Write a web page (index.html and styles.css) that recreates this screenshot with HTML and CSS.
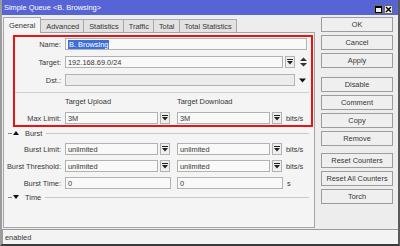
FILE: index.html
```html
<!DOCTYPE html>
<html lang="en">
<head>
    <meta charset="UTF-8">
    <title>Simple Queue &lt;B. Browsing&gt;</title>
    <link rel="stylesheet" href="styles.css">
</head>
<body>
    <div class="window">
        <div class="titlebar">
            <span class="title">Simple Queue &lt;B. Browsing&gt;</span>
            <span class="win-btns">
                <span class="win-btn"><svg width="7" height="7" viewBox="0 0 7 7"><rect x="0.5" y="0.5" width="6" height="6" fill="none" stroke="#000"/><line x1="0" y1="1.5" x2="7" y2="1.5" stroke="#000"/></svg></span>
                <span class="win-btn"><svg width="7" height="7" viewBox="0 0 7 7"><path d="M1 1 L6 6 M6 1 L1 6" stroke="#000" stroke-width="1.4"/></svg></span>
            </span>
        </div>

        <div class="main">
            <div class="left">
                <div class="tabs">
                    <span class="tab active">General</span>
                    <span class="tab">Advanced</span>
                    <span class="tab">Statistics</span>
                    <span class="tab">Traffic</span>
                    <span class="tab">Total</span>
                    <span class="tab">Total Statistics</span>
                </div>

                <div class="panel">
                    <div class="highlight">
                        <div class="row">
                            <span class="label">Name:</span>
                            <span class="field w-name"><span class="sel">B. Browsing</span></span>
                        </div>
                        <div class="row">
                            <span class="label">Target:</span>
                            <span class="field w-target">192.168.69.0/24</span>
                            <span class="spin"><svg width="6" height="6" viewBox="0 0 6 6"><line x1="0" y1="0.5" x2="6" y2="0.5" stroke="#222"/><path d="M0 2 L6 2 L3 5.5 Z" fill="#222"/></svg></span>
                            <span class="updown"><svg width="7" height="10" viewBox="0 0 7 10"><path d="M0 4 L7 4 L3.5 0.5 Z M0 6 L7 6 L3.5 9.5 Z" fill="#333"/></svg></span>
                        </div>
                        <div class="row">
                            <span class="label">Dst.:</span>
                            <span class="field w-dst disabled"></span>
                            <span class="drop"><svg width="7" height="5" viewBox="0 0 7 5"><path d="M0 0.5 L7 0.5 L3.5 4.5 Z" fill="#111"/></svg></span>
                        </div>
                        <div class="separator"></div>
                        <div class="row heads">
                            <span class="label"></span>
                            <span class="head">Target Upload</span>
                            <span class="head">Target Download</span>
                        </div>
                        <div class="row">
                            <span class="label">Max Limit:</span>
                            <span class="field w-rate">3M</span>
                            <span class="spin"><svg width="6" height="6" viewBox="0 0 6 6"><line x1="0" y1="0.5" x2="6" y2="0.5" stroke="#222"/><path d="M0 2 L6 2 L3 5.5 Z" fill="#222"/></svg></span>
                            <span class="field w-rate col2">3M</span>
                            <span class="spin"><svg width="6" height="6" viewBox="0 0 6 6"><line x1="0" y1="0.5" x2="6" y2="0.5" stroke="#222"/><path d="M0 2 L6 2 L3 5.5 Z" fill="#222"/></svg></span>
                            <span class="unit">bits/s</span>
                        </div>
                    </div>

                    <div class="section">
                        <span class="dash"></span>
                        <svg width="6" height="4" viewBox="0 0 6 4"><path d="M0 4 L6 4 L3 0 Z" fill="#111"/></svg>
                        <span class="section-name">Burst</span>
                        <span class="rule"></span>
                    </div>
                    <div class="row plain">
                        <span class="label">Burst Limit:</span>
                        <span class="field w-rate">unlimited</span>
                        <span class="spin"><svg width="6" height="6" viewBox="0 0 6 6"><line x1="0" y1="0.5" x2="6" y2="0.5" stroke="#222"/><path d="M0 2 L6 2 L3 5.5 Z" fill="#222"/></svg></span>
                        <span class="field w-rate col2">unlimited</span>
                        <span class="spin"><svg width="6" height="6" viewBox="0 0 6 6"><line x1="0" y1="0.5" x2="6" y2="0.5" stroke="#222"/><path d="M0 2 L6 2 L3 5.5 Z" fill="#222"/></svg></span>
                        <span class="unit">bits/s</span>
                    </div>
                    <div class="row plain">
                        <span class="label">Burst Threshold:</span>
                        <span class="field w-rate">unlimited</span>
                        <span class="spin"><svg width="6" height="6" viewBox="0 0 6 6"><line x1="0" y1="0.5" x2="6" y2="0.5" stroke="#222"/><path d="M0 2 L6 2 L3 5.5 Z" fill="#222"/></svg></span>
                        <span class="field w-rate col2">unlimited</span>
                        <span class="spin"><svg width="6" height="6" viewBox="0 0 6 6"><line x1="0" y1="0.5" x2="6" y2="0.5" stroke="#222"/><path d="M0 2 L6 2 L3 5.5 Z" fill="#222"/></svg></span>
                        <span class="unit">bits/s</span>
                    </div>
                    <div class="row plain">
                        <span class="label">Burst Time:</span>
                        <span class="field w-time">0</span>
                        <span class="field w-time col2">0</span>
                        <span class="unit">s</span>
                    </div>

                    <div class="section">
                        <span class="dash"></span>
                        <svg width="6" height="4" viewBox="0 0 6 4"><path d="M0 0 L6 0 L3 4 Z" fill="#111"/></svg>
                        <span class="section-name">Time</span>
                        <span class="rule"></span>
                    </div>
                </div>
            </div>

            <div class="buttons">
                <span class="button">OK</span>
                <span class="button">Cancel</span>
                <span class="button">Apply</span>
                <span class="button group">Disable</span>
                <span class="button">Comment</span>
                <span class="button">Copy</span>
                <span class="button">Remove</span>
                <span class="button group-sm">Reset Counters</span>
                <span class="button">Reset All Counters</span>
                <span class="button">Torch</span>
            </div>
        </div>

        <div class="statusbar">
            <span class="status">enabled</span>
        </div>
    </div>
</body>
</html>
```

FILE: styles.css
```css
* {
    box-sizing: border-box;
}

body {
    margin: 0;
    width: 400px;
    height: 246px;
    overflow: hidden;
    font-family: "Liberation Sans", Arial, sans-serif;
    font-size: 7.4px;
    color: #363636;
}

.window {
    width: 400px;
    height: 246px;
    display: flex;
    flex-direction: column;
    background-color: #ededed;
    border-left: 2px solid #9c9c9c;
    border-right: 2px solid #5a5a5a;
    border-bottom: 2px solid #3a3a3a;
}

.titlebar {
    height: 15px;
    display: flex;
    align-items: center;
    justify-content: space-between;
    padding: 0 5px 0 2px;
    background-color: #5664d6;
    color: #fff;
    font-size: 7.4px;
}

.win-btns {
    display: flex;
    gap: 1px;
    margin-top: 3px;
}

.win-btn {
    width: 9px;
    height: 9px;
    display: flex;
    align-items: center;
    justify-content: center;
    background-color: #f0f0f0;
    border: 1px solid #6a6a6a;
}

.main {
    flex: 1;
    display: flex;
    padding-left: 1px;
}

.left {
    width: 312px;
    display: flex;
    flex-direction: column;
    padding-top: 2px;
}

.tabs {
    height: 15px;
    display: flex;
    align-items: flex-end;
    padding-left: 1px;
}

.tab {
    height: 13px;
    padding: 0 4px 0 5px;
    display: flex;
    align-items: center;
    background-color: #e2e2e2;
    border: 1px solid #a8a8a8;
    border-bottom: none;
    margin-left: -1px;
}

.tab.active {
    height: 16px;
    margin-bottom: -1px;
    padding: 0 5px;
    background-color: #f4f4f4;
    position: relative;
    z-index: 1;
}

.panel {
    flex: 1;
    background-color: #f4f4f4;
    border: 1px solid #a4a4a4;
}

.highlight {
    margin: 2px 1px 0 9px;
    padding: 1px 0 1px 0;
    border: 2px solid #e81414;
}

.row {
    height: 12px;
    display: flex;
    align-items: center;
    margin-bottom: 6px;
}

.highlight .row:last-child {
    margin-bottom: 0;
}

.label {
    width: 46px;
    margin-right: 4px;
    text-align: right;
    white-space: nowrap;
}

.row.plain {
    margin-top: 5px;
    margin-bottom: 0;
}

.row.plain .label {
    width: 57px;
}

.field {
    height: 12px;
    display: flex;
    align-items: center;
    padding-left: 2px;
    background-color: #f9f9f9;
    border: 1px solid #b2b2b2;
    white-space: nowrap;
}

.field.disabled {
    background-color: #ececec;
}

.w-name {
    width: 242px;
}

.w-target {
    width: 218px;
}

.w-dst {
    width: 230px;
}

.w-rate {
    width: 93px;
}

.w-time {
    width: 106px;
}

.col2 {
    margin-left: 6px;
}

.w-rate.col2 {
    margin-left: 7px;
}

.sel {
    background-color: #3d6fd8;
    color: #fff;
    padding: 0 1px;
    line-height: 9px;
}

.spin {
    width: 10px;
    height: 12px;
    margin-left: 2px;
    display: flex;
    align-items: center;
    justify-content: center;
    background-color: #efefef;
    border: 1px solid #b2b2b2;
}

.updown {
    margin-left: 5px;
    display: flex;
}

.drop {
    margin-left: 4px;
    display: flex;
}

.separator {
    height: 1px;
    margin: 0 2px 0 0;
    background-color: #cfcfcf;
}

.row.heads {
    height: 10px;
    margin-top: 3px;
}

.head {
    width: 112px;
}

.unit {
    margin-left: 4px;
}

.section {
    height: 10px;
    margin-top: 1px;
    display: flex;
    align-items: center;
    padding-right: 5px;
}

.row.plain + .section {
    margin-top: 3px;
}

.section .dash {
    width: 4px;
    height: 1px;
    margin: 0 1px 0 4px;
    background-color: #888;
}

.section-name {
    margin-left: 6px;
    margin-right: 4px;
}

.section .rule {
    flex: 1;
    height: 1px;
    background-color: #c8c8c8;
}

.buttons {
    width: 72px;
    margin-left: 6px;
    padding-top: 2px;
    display: flex;
    flex-direction: column;
}

.button {
    height: 15px;
    margin-bottom: 3px;
    display: flex;
    align-items: center;
    justify-content: center;
    background-color: #efefef;
    border: 1px solid #9c9c9c;
    white-space: nowrap;
}

.button.group {
    margin-top: 6px;
}

.button.group-sm {
    margin-top: 4px;
}

.statusbar {
    height: 16px;
    padding: 1px 0 0 0;
}

.status {
    height: 15px;
    display: flex;
    align-items: center;
    padding-left: 2px;
    background-color: #f3f3f3;
    border-top: 1px solid #9a9a9a;
    border-left: 1px solid #9a9a9a;
}
```
